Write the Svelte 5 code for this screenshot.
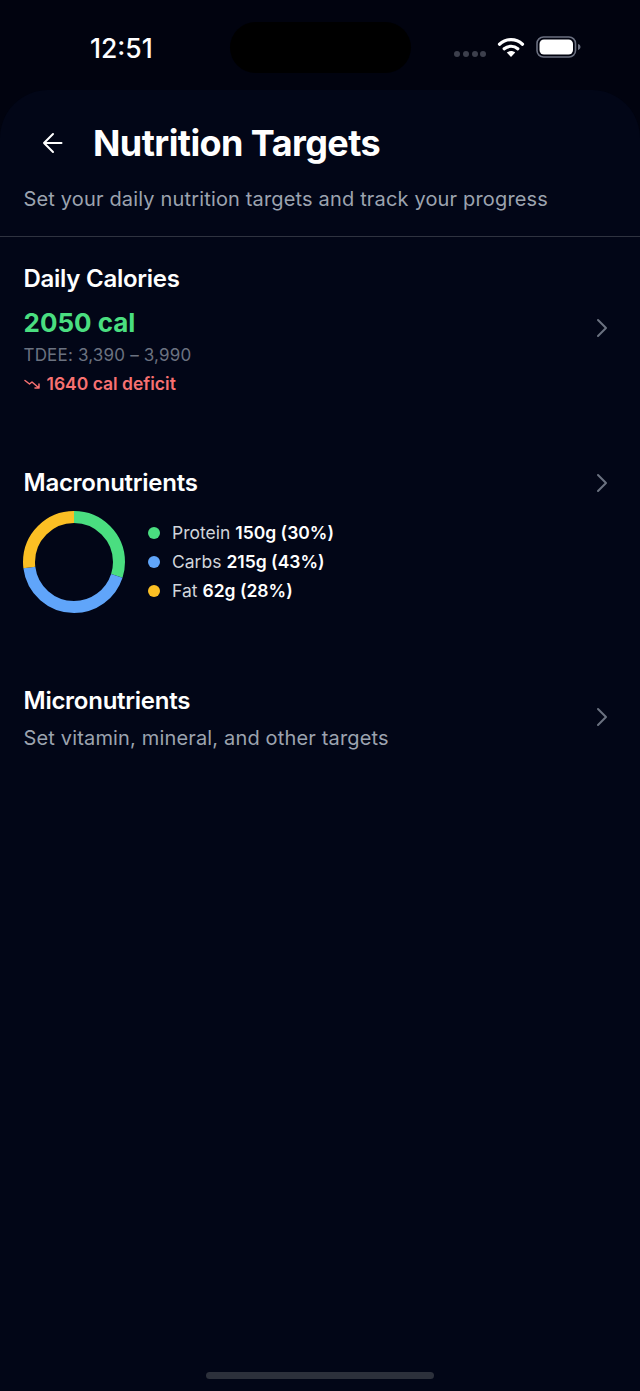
<script lang="ts">
  // Macro split drives both the donut and the legend
  const macros = [
    { name: 'Protein', value: '150g (30%)', pct: 30, color: '#4ade80' },
    { name: 'Carbs', value: '215g (43%)', pct: 43, color: '#60a5fa' },
    { name: 'Fat', value: '62g (28%)', pct: 27, color: '#fbbf24' }
  ];

  let offset = 0;
  const segments = macros.map((m) => {
    const seg = { ...m, offset: -offset };
    offset += m.pct;
    return seg;
  });
</script>

<div class="screen">
  <div class="status">
    <span class="time">12:51</span>
    <div class="island"></div>
    <div class="status-icons">
      <div class="dots"><i></i><i></i><i></i><i></i></div>
      <svg class="wifi" width="28" height="22" viewBox="0 0 28 22" fill="none">
        <path d="M2.5 8.2C9 2.2 19 2.2 25.5 8.2" stroke="#fff" stroke-width="3.2" stroke-linecap="round"/>
        <path d="M7.2 12.8C11 9.4 17 9.4 20.8 12.8" stroke="#fff" stroke-width="3.2" stroke-linecap="round"/>
        <path d="M14 21L9.8 16.6C12 14.6 16 14.6 18.2 16.6Z" fill="#fff"/>
      </svg>
      <svg class="battery" width="46" height="22" viewBox="0 0 46 22" fill="none">
        <rect x="1" y="1" width="38.5" height="20" rx="6.5" stroke="#6b7080" stroke-width="1.6"/>
        <rect x="3.5" y="3.5" width="33.5" height="15" rx="4.5" fill="#fff"/>
        <path d="M42 8C43.6 8.4 44.5 9.6 44.5 11C44.5 12.4 43.6 13.6 42 14Z" fill="#6b7080"/>
      </svg>
    </div>
  </div>

  <main class="sheet">
    <header class="head">
      <div class="title-row">
        <svg class="back" width="24" height="24" viewBox="0 0 24 24" fill="none" stroke="#fff" stroke-width="2" stroke-linecap="round" stroke-linejoin="round">
          <path d="M20.5 12H3M12 3L3 12L12 21"/>
        </svg>
        <h1>Nutrition Targets</h1>
      </div>
      <p class="sub">Set your daily nutrition targets and track your progress</p>
    </header>

    <section class="row calories">
      <div>
        <h2>Daily Calories</h2>
        <div class="cal">2050 cal</div>
        <div class="tdee">TDEE: 3,390 – 3,990</div>
        <div class="deficit">
          <svg width="16" height="12" viewBox="0 0 16 12" fill="none" stroke="#f87171" stroke-width="1.5" stroke-linecap="round" stroke-linejoin="round">
            <path d="M1 2.5L5.5 6L8 4L15 10M15 6V10H11"/>
          </svg>
          <span>1640 cal deficit</span>
        </div>
      </div>
      <svg class="chev" width="24" height="24" viewBox="0 0 24 24" fill="none"><path d="M8 4L16 12L8 20"/></svg>
    </section>

    <section class="macros">
      <div class="macros-head">
        <h2>Macronutrients</h2>
        <svg class="chev" width="24" height="24" viewBox="0 0 24 24" fill="none"><path d="M8 4L16 12L8 20"/></svg>
      </div>
      <div class="macros-body">
        <svg class="donut" width="102" height="102" viewBox="0 0 102 102" fill="none">
          {#each segments as s}
            <circle cx="51" cy="51" r="45" stroke={s.color} stroke-width="12" pathLength="100"
              stroke-dasharray="{s.pct} {100 - s.pct}" stroke-dashoffset={s.offset}
              transform="rotate(-90 51 51)"/>
          {/each}
        </svg>
        <ul>
          {#each macros as m}
            <li>
              <span class="dot" style="background: {m.color}"></span>
              <span class="name">{m.name}</span>
              <strong>{m.value}</strong>
            </li>
          {/each}
        </ul>
      </div>
    </section>

    <section class="row micro">
      <div>
        <h2>Micronutrients</h2>
        <p class="sub">Set vitamin, mineral, and other targets</p>
      </div>
      <svg class="chev" width="24" height="24" viewBox="0 0 24 24" fill="none"><path d="M8 4L16 12L8 20"/></svg>
    </section>
  </main>

  <div class="home"></div>
</div>

<style>
  :global(body) {
    margin: 0;
    background: #01030f;
  }

  .screen {
    position: relative;
    height: 1391px;
    overflow: hidden;
    background: #01030f;
    font-family: Inter, "Liberation Sans", sans-serif;
    color: #fff;
  }

  .status {
    position: relative;
    height: 90px;
  }

  .time {
    position: absolute;
    left: 90px;
    top: 31px;
    font-size: 26.5px;
    line-height: 34px;
    font-weight: 500;
  }

  .island {
    position: absolute;
    left: 230px;
    top: 22px;
    width: 181px;
    height: 51px;
    border-radius: 26px;
    background: #000;
  }

  .status-icons {
    position: absolute;
    left: 454px;
    top: 36px;
    display: flex;
    align-items: flex-start;
  }

  .dots {
    display: flex;
    gap: 2.8px;
    margin-top: 15px;
  }

  .dots i {
    width: 6px;
    height: 6px;
    border-radius: 50%;
    background: #3c3f4c;
  }

  .wifi {
    margin-left: 11px;
  }

  .battery {
    margin-left: 11px;
  }

  .sheet {
    height: 1301px;
    background: #020617;
    border-radius: 48px 48px 0 0;
  }

  .head {
    padding: 29px 23.5px 23px;
    border-bottom: 1px solid #2f3340;
  }

  .title-row {
    display: flex;
    align-items: center;
    gap: 28px;
    padding-left: 17.5px;
  }

  h1 {
    margin: 0;
    font-size: 36px;
    line-height: 48px;
    font-weight: 650;
    letter-spacing: -0.58px;
  }

  h2 {
    margin: 0;
    font-size: 24px;
    line-height: 28px;
    font-weight: 620;
    letter-spacing: -0.26px;
  }

  .sub {
    margin: 0;
    font-size: 20px;
    line-height: 28px;
    letter-spacing: 0.16px;
    color: #9ca3af;
  }

  .head .sub {
    margin-top: 18px;
  }

  .row {
    display: flex;
    justify-content: space-between;
    align-items: center;
    padding: 0 26px 0 23.5px;
  }

  .calories {
    padding-top: 28px;
  }

  .cal {
    margin-top: 12px;
    font-size: 26px;
    line-height: 36px;
    font-weight: 650;
    color: #4ade80;
  }

  .tdee {
    margin-top: 2px;
    font-size: 17px;
    line-height: 24px;
    letter-spacing: 0.18px;
    color: #6b7280;
  }

  .deficit {
    display: flex;
    align-items: center;
    gap: 7px;
    margin-top: 5px;
    font-size: 17.5px;
    line-height: 24px;
    font-weight: 620;
    color: #f87171;
  }

  .chev {
    flex: none;
  }

  .chev path {
    stroke: #6b7280;
    stroke-width: 2;
    stroke-linecap: round;
    stroke-linejoin: round;
  }

  .row .chev {
    margin-bottom: 6px;
  }

  .micro .chev {
    margin-bottom: 5px;
  }

  .macros {
    margin-top: 73px;
    padding: 0 26px 0 23.5px;
  }

  .macros-head {
    display: flex;
    justify-content: space-between;
    align-items: center;
  }

  .macros-body {
    display: flex;
    align-items: center;
    gap: 23px;
    margin-top: 14px;
    margin-left: -0.5px;
  }

  .donut {
    flex: none;
  }

  ul {
    display: flex;
    flex-direction: column;
    gap: 5px;
    margin: 0;
    padding: 0;
    list-style: none;
  }

  li {
    display: flex;
    align-items: center;
    font-size: 17.5px;
    line-height: 24px;
  }

  .dot {
    width: 12px;
    height: 12px;
    border-radius: 50%;
    margin-right: 12px;
  }

  .name {
    color: #d1d5db;
    margin-right: 5px;
  }

  strong {
    font-weight: 620;
  }

  .micro {
    margin-top: 74px;
  }

  .micro .sub {
    margin-top: 9px;
  }

  .home {
    position: absolute;
    left: 206px;
    top: 1372px;
    width: 228px;
    height: 7px;
    border-radius: 4px;
    background: #2c303b;
  }
</style>
